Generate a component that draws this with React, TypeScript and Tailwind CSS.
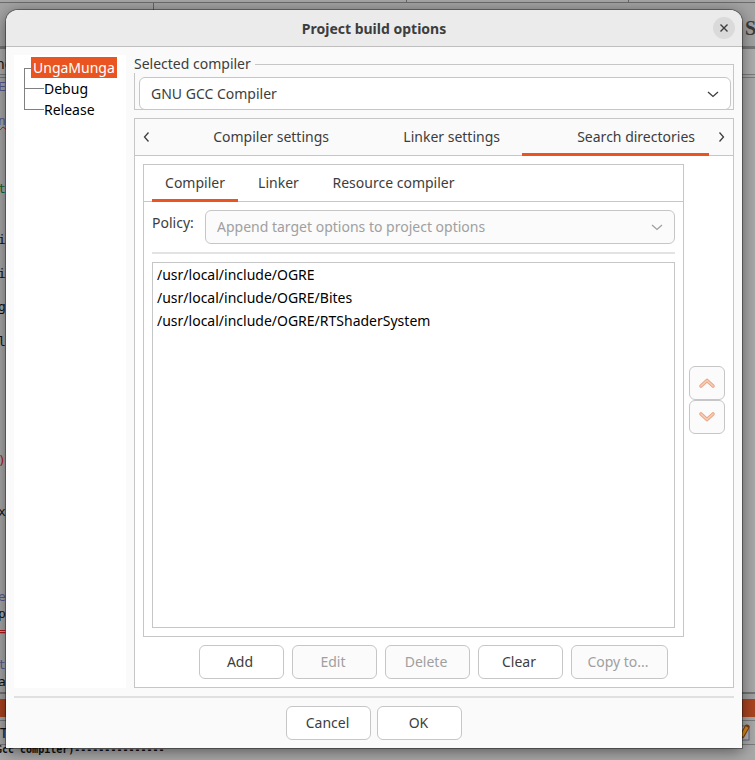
import React, { useState } from "react";

const codeFragments = [
  { text: "E", place: "top-[0px] text-[#5c5c94]" },
  { text: "n", place: "top-[34px] text-[#5c5c94] underline decoration-wavy decoration-[#b01818] decoration-1" },
  { text: "t", place: "top-[102px] text-[#0e6b2a]" },
  { text: "i", place: "top-[153px] text-[#111]" },
  { text: "i", place: "top-[187px] text-[#111]" },
  { text: "g", place: "top-[220px] text-[#111]" },
  { text: "l", place: "top-[255px] text-[#111]" },
  { text: ")", place: "top-[374px] text-[#b01818]" },
  { text: "x", place: "top-[425px] text-[#111]" },
  { text: "e", place: "top-[510px] text-[#5c5c94]" },
  { text: "p", place: "top-[527px] text-[#111]" },
  { text: "=", place: "top-[544px] text-[#b01818]" },
  { text: "t", place: "top-[578px] text-[#5c5c94]" },
  { text: "a", place: "top-[595px] text-[#111]" },
];

function Backdrop() {
  return (
    <div aria-hidden="true" className="absolute inset-0 flex flex-col overflow-hidden bg-[#a9a9a9]">
      <div className="flex h-[3px] shrink-0 border-b border-[#6c6c6c] bg-[#a6a6a6]">
        <div className="w-[407px] border-r border-[#666]" />
        <div className="w-[222px] border-r border-[#666]" />
      </div>
      <div className="flex h-[43px] shrink-0 justify-between bg-[#a3a3a3]">
        <div className="w-[154px] border-r border-[#666]" />
        <div className="w-[10px] pt-[11px] font-['Liberation_Serif',serif] text-[20px] font-bold leading-[28px] text-[#3c3c3c]">S</div>
      </div>
      <div className="h-[3px] shrink-0 bg-[#777]" />
      <div className="h-[26px] shrink-0 border-b border-[#7c7c7c] bg-[#aeaeae] pt-[6px] font-['Noto_Sans',sans-serif] text-[14px] leading-[18px] text-[#111]">
        <span className="-ml-1">ne</span>
      </div>
      <div className="h-[3px] shrink-0 border-b border-[#7c7c7c]" />
      <div className="relative min-h-0 flex-1 border-b-2 border-[#747474] font-['DejaVu_Sans_Mono',monospace] text-[13px] leading-[17px]">
        {codeFragments.map((f, i) => (
          <span key={i} className={`absolute left-[-2px] ${f.place}`}>
            {f.text}
          </span>
        ))}
      </div>
      <div className="h-[5px] shrink-0 bg-[#a3a3a3]" />
      <div className="h-[18px] shrink-0 bg-[#ac4420]" />
      <div className="h-1 shrink-0 border-b border-[#7c7c7c]" />
      <div className="flex h-[24px] shrink-0 items-center justify-between border-b border-[#7c7c7c] font-['Noto_Sans',sans-serif] text-[14px] text-[#111]">
        <span>T</span>
        <svg width="16" height="18" viewBox="0 0 16 18" className="mr-1">
          <rect x="1" y="2" width="13" height="14" fill="#b5b5b8" stroke="#656580" />
          <path d="M7 12 L12 3" stroke="#7e3e12" strokeWidth="5" strokeLinecap="round" />
          <path d="M7 12 L12 3" stroke="#d98c1c" strokeWidth="3" />
        </svg>
      </div>
      <div className="h-[15px] shrink-0 overflow-hidden whitespace-pre font-['DejaVu_Sans_Mono',monospace] text-[10px] font-bold leading-[9px] text-[#111]">
        <div className="-ml-1">Gcc compiler)---------------</div>
      </div>
    </div>
  );
}

function Chevron({ d, className = "" }: { d: string; className?: string }) {
  return (
    <svg width="16" height="16" viewBox="0 0 16 16" fill="none" stroke="currentColor" strokeWidth="1.3" className={className}>
      <path d={d} />
    </svg>
  );
}

const DOWN = "M3 6 L8 10.5 L13 6";

function PushButton({ label, disabled = false, wide = false }: { label: string; disabled?: boolean; wide?: boolean }) {
  return (
    <button
      type="button"
      disabled={disabled}
      className={`h-[34px] rounded-md border border-[#c6c6c6] pr-0.5 pb-0.5 ${wide ? "w-[97px]" : "w-[85px]"} ${
        disabled ? "bg-[#fbfbfb] text-[#a0a0a0]" : "bg-white text-[#3d3d3d]"
      }`}
    >
      {label}
    </button>
  );
}

function ArrowButton({ up = false }: { up?: boolean }) {
  const d = up ? "M3 11 L9 5.5 L15 11" : "M3 5 L9 10.5 L15 5";
  return (
    <button
      type="button"
      disabled
      aria-label={up ? "Move up" : "Move down"}
      className="flex h-[34px] w-9 items-center justify-center rounded-md border border-[#c6c6c6] bg-[#fbfbfb] pr-px"
    >
      <svg width="18" height="16" viewBox="0 0 18 16" fill="none" strokeLinecap="round" strokeLinejoin="round">
        <path d={d} stroke="#eba68f" strokeWidth="3.6" />
        <path d={d} stroke="#f5cfae" strokeWidth="1.6" />
      </svg>
    </button>
  );
}

function ProjectTree() {
  return (
    <nav aria-label="Targets" className="w-28 shrink-0 bg-white pt-[2px] pl-[10px] leading-[21px] text-black">
      <div className="flex items-center">
        <span className="h-[10px] w-[7px] self-end border-t border-l border-[#808080]" />
        <span className="bg-[#e95420] px-[2px] text-white">UngaMunga</span>
      </div>
      {["Debug", "Release"].map((name) => (
        <div key={name} className="flex h-[21px]">
          <span className="h-[11px] w-5 border-b border-l border-[#808080]" />
          <span className={name === "Debug" ? "-ml-5 border-l border-[#808080] pl-[19px]" : ""}>{name}</span>
        </div>
      ))}
    </nav>
  );
}

const paths = [
  "/usr/local/include/OGRE",
  "/usr/local/include/OGRE/Bites",
  "/usr/local/include/OGRE/RTShaderSystem",
];

const scopes = [
  { name: "Compiler", size: "w-[86px]" },
  { name: "Linker", size: "w-[65px]" },
  { name: "Resource compiler", size: "w-[149px]" },
];

function SearchDirectories() {
  const [tab, setTab] = useState("Compiler");
  return (
    <div className="flex min-w-0 flex-1 flex-col border border-[#c6c6c6]">
      <div role="tablist" className="flex h-[37px] shrink-0 gap-2 border-b border-[#c6c6c6] px-2">
        {scopes.map((s) => (
          <button
            key={s.name}
            type="button"
            role="tab"
            aria-selected={tab === s.name}
            onClick={() => setTab(s.name)}
            className={`-mb-px border-b-[3px] ${s.size} ${tab === s.name ? "border-[#e95420]" : "border-transparent"}`}
          >
            {s.name}
          </button>
        ))}
      </div>
      <div className="flex min-h-0 flex-1 flex-col p-2">
        <div className="flex">
          <label htmlFor="policy" className="w-[53px] leading-[26px]">
            Policy:
          </label>
          <div className="relative flex-1">
            <select
              id="policy"
              disabled
              className="h-[34px] w-full appearance-none rounded-md border border-[#c6c6c6] bg-[#fbfbfb] pb-0.5 pl-[11px] text-[#a0a0a0] opacity-100"
            >
              <option>Append target options to project options</option>
            </select>
            <Chevron d={DOWN} className="pointer-events-none absolute top-[9px] right-[10px] text-[#a0a0a0]" />
          </div>
        </div>
        <div className="my-2 h-[2px] shrink-0 bg-[#e3e3e3]" />
        <ul className="flex-1 border border-[#c6c6c6] bg-white px-1 leading-[23px] text-black">
          {paths.map((p) => (
            <li key={p}>{p}</li>
          ))}
        </ul>
      </div>
    </div>
  );
}

const pages = [
  { name: "Compiler settings", size: "w-[184px]" },
  { name: "Linker settings", size: "w-[163px]" },
  { name: "Search directories", size: "w-[187px]" },
];

export default function App() {
  const [page, setPage] = useState("Search directories");
  return (
    <div className="relative flex min-h-screen pt-[10px] pr-[13px] pb-3 pl-[6px] font-['Noto_Sans','Open_Sans',sans-serif] text-[14px] text-[#3d3d3d]">
      <Backdrop />
      <main className="relative flex min-w-0 flex-1 flex-col rounded-t-xl bg-[#fafafa] shadow-[0_0_0_1px_rgba(0,0,0,0.35),0_3px_16px_rgba(0,0,0,0.5)]">
        <header className="relative flex h-[37px] shrink-0 items-center justify-center rounded-t-xl border-b border-[#bfbfbf] bg-[#ebebeb]">
          <h1 className="font-bold">Project build options</h1>
          <button
            type="button"
            aria-label="Close"
            className="absolute top-[7px] right-[7px] flex size-[22px] items-center justify-center rounded-full bg-[#dadada]"
          >
            <svg width="8" height="8" viewBox="0 0 8 8" stroke="#3d3d3d" strokeWidth="1.4">
              <path d="M0.5 0.5 L7.5 7.5 M7.5 0.5 L0.5 7.5" />
            </svg>
          </button>
        </header>

        <div className="flex flex-1 gap-2 p-2">
          <ProjectTree />
          <div className="flex min-w-0 flex-1 flex-col gap-2">
            <fieldset className="min-w-0 border border-[#c6c6c6] pt-1 pr-[2px] pl-1">
              <legend className="relative -ml-[5px] h-[18px] bg-[#fafafa] pr-1 leading-[18px]">
                <label htmlFor="compiler">Selected compiler</label>
              </legend>
              <div className="relative -mb-px">
                <select
                  id="compiler"
                  className="block h-[33px] w-full appearance-none rounded-md border border-[#c6c6c6] bg-white pl-[11px]"
                >
                  <option>GNU GCC Compiler</option>
                </select>
                <Chevron d={DOWN} className="pointer-events-none absolute top-[9px] right-[10px]" />
              </div>
            </fieldset>

            <section className="flex flex-1 flex-col border border-[#c6c6c6] bg-white">
              <div className="flex h-[37px] shrink-0 border-b border-[#c6c6c6] bg-[#fafafa]">
                <button type="button" aria-label="Previous tab" className="flex w-6 items-center justify-center">
                  <Chevron d="M9.5 3.5 L5.5 8 L9.5 12.5" />
                </button>
                <div role="tablist" className="flex min-w-0 flex-1 justify-between gap-2">
                  {pages.map((p) => (
                    <button
                      key={p.name}
                      type="button"
                      role="tab"
                      aria-selected={page === p.name}
                      onClick={() => setPage(p.name)}
                      className={`-mb-px border-b-[3px] pr-[14px] text-right whitespace-nowrap ${p.size} ${
                        page === p.name ? "border-[#e95420]" : "border-transparent"
                      }`}
                    >
                      {p.name}
                    </button>
                  ))}
                </div>
                <button type="button" aria-label="Next tab" className="flex w-6 items-center justify-center">
                  <Chevron d="M6.5 3.5 L10.5 8 L6.5 12.5" />
                </button>
              </div>
              <div className="flex flex-1 flex-col gap-2 p-2">
                <div className="flex flex-1 gap-[5px]">
                  <SearchDirectories />
                  <div className="flex flex-col justify-center pb-0.5">
                    <ArrowButton up />
                    <ArrowButton />
                  </div>
                </div>
                <div className="flex justify-center gap-2 pr-0.5">
                  <PushButton label="Add" />
                  <PushButton label="Edit" disabled />
                  <PushButton label="Delete" disabled />
                  <PushButton label="Clear" />
                  <PushButton label="Copy to..." disabled wide />
                </div>
              </div>
            </section>
          </div>
        </div>

        <footer className="px-2 pb-2">
          <div className="h-[2px] bg-[#e0e0e0]" />
          <div className="flex justify-center gap-[6px] pt-2">
            <PushButton label="Cancel" />
            <PushButton label="OK" />
          </div>
        </footer>
      </main>
    </div>
  );
}
